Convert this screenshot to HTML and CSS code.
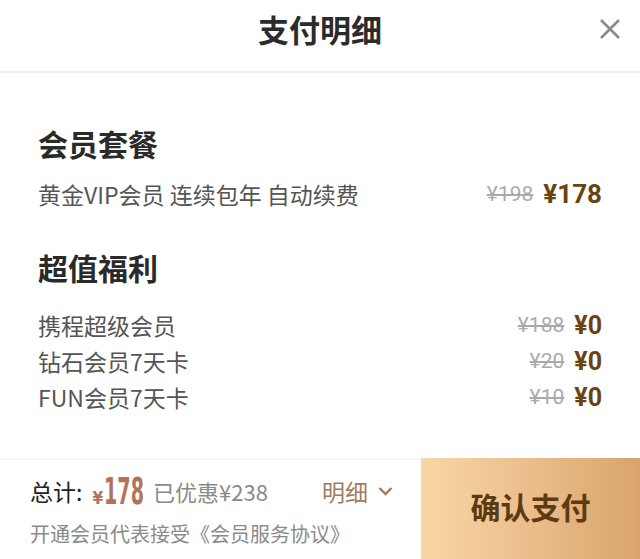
FILE: index.html
```html
<!DOCTYPE html>
<html lang="zh-CN">
<head>
<meta charset="utf-8">
<title>支付明细</title>
<link rel="stylesheet" href="styles.css">
</head>
<body>
<div class="sheet">
  <header class="header">
    <h1 class="title">支付明细</h1>
    <button class="close" aria-label="关闭">
      <svg width="22" height="22" viewBox="0 0 22 22"><path d="M2 2L20 20M20 2L2 20" stroke="#8a8a8a" stroke-width="2.6" stroke-linecap="butt"/></svg>
    </button>
  </header>
  <main class="content">
    <section class="section">
      <h2 class="section-title">会员套餐</h2>
      <div class="row">
        <span class="name">黄金VIP会员 连续包年 自动续费</span>
        <span class="prices"><s class="old">¥198</s><b class="now big">¥178</b></span>
      </div>
    </section>
    <section class="section second">
      <h2 class="section-title">超值福利</h2>
      <div class="row small">
        <span class="name">携程超级会员</span>
        <span class="prices"><s class="old">¥188</s><b class="now">¥0</b></span>
      </div>
      <div class="row small">
        <span class="name">钻石会员7天卡</span>
        <span class="prices"><s class="old">¥20</s><b class="now">¥0</b></span>
      </div>
      <div class="row small">
        <span class="name">FUN会员7天卡</span>
        <span class="prices"><s class="old">¥10</s><b class="now">¥0</b></span>
      </div>
    </section>
  </main>
  <footer class="footer">
    <div class="summary">
      <div class="total-line">
        <span class="total-label">总计:</span>
        <span class="total-price"><span class="yen">¥</span><span class="amount">178</span></span>
        <span class="saved">已优惠¥238</span>
        <span class="detail">明细
          <svg class="chev" width="15" height="10" viewBox="0 0 15 10"><path d="M1.5 2L7.5 8L13.5 2" fill="none" stroke="#a27a5e" stroke-width="2.4"/></svg>
        </span>
      </div>
      <div class="agreement">开通会员代表接受《会员服务协议》</div>
    </div>
    <button class="pay">确认支付</button>
  </footer>
</div>
</body>
</html>
```

FILE: styles.css
```css
* { box-sizing: border-box; }
html, body { margin: 0; padding: 0; background: #fff; }
body {
  font-family: "Noto Sans CJK SC", "Noto Sans", sans-serif;
  color: #333;
}
.sheet {
  width: 640px;
  height: 559px;
  display: flex;
  flex-direction: column;
  overflow: hidden;
}
.header {
  height: 73px;
  border-bottom: 2px solid #eeeeee;
  display: flex;
  align-items: center;
  justify-content: center;
  position: relative;
  flex: none;
}
.title {
  margin: 0 0 14px;
  font-size: 31px;
  font-weight: 700;
  color: #2b2b2b;
  line-height: 40px;
}
.close {
  position: absolute;
  right: 19px;
  top: 18px;
  border: 0;
  background: none;
  padding: 0;
  width: 22px;
  height: 22px;
  display: block;
}
.close svg { display: block; }
.content {
  flex: 1;
  padding: 0 38px;
}
.section { padding-top: 50px; }
.section.second { padding-top: 35px; }
.section-title {
  margin: 0 0 13px;
  font-size: 30px;
  font-weight: 700;
  line-height: 40px;
  color: #2a2a2a;
}
.section.second .section-title { margin-bottom: 20px; }
.row {
  display: flex;
  justify-content: space-between;
  align-items: center;
  height: 36px;
}
.name {
  font-size: 23px;
  color: #555;
}
.prices {
  display: flex;
  align-items: center;
  gap: 10px;
}
.old {
  font-family: "Roboto", "Noto Sans", sans-serif;
  font-size: 21px;
  color: #aaaaaa;
  text-decoration: line-through;
  text-decoration-thickness: 1.5px;
}
.now {
  font-family: "Roboto", "Noto Sans", sans-serif;
  font-weight: 700;
  font-size: 25px;
  color: #6a4312;
}
.now.big { font-size: 26px; }
.footer {
  height: 101px;
  flex: none;
  display: flex;
  border-top: 2px solid #f6f6f6;
}
.summary {
  flex: 1;
  padding: 11px 0 0 30px;
}
.total-line {
  display: flex;
  align-items: center;
  height: 40px;
}
.total-label {
  font-size: 23px;
  color: #222;
}
.total-price {
  display: inline-flex;
  align-items: baseline;
  margin-left: 10px;
  color: #b3735a;
}
.yen {
  font-family: "DejaVu Sans Condensed", "DejaVu Sans", sans-serif;
  font-weight: 700;
  font-size: 17px;
}
.amount {
  font-family: "DejaVu Sans Condensed", "DejaVu Sans", sans-serif;
  font-weight: 700;
  font-size: 38px;
  display: inline-block;
  transform: scaleX(0.56);
  transform-origin: left center;
  width: 41px;
  margin-left: 1px;
}
.saved {
  margin-left: 8px;
  font-size: 22px;
  color: #8a8a8a;
}
.detail {
  margin-left: 54px;
  font-size: 23px;
  color: #a17a5e;
  display: inline-flex;
  align-items: center;
  gap: 10px;
}
.chev { display: block; }
.agreement {
  margin-top: 8px;
  font-size: 20px;
  color: #8a8a8a;
}
.pay {
  width: 219px;
  flex: none;
  border: 0;
  margin: -2px 0 0;
  background: linear-gradient(90deg, #f8d7a4 0%, #ecc08e 45%, #d9a46c 100%);
  font-family: "Noto Sans CJK SC", sans-serif;
  font-size: 30px;
  font-weight: 700;
  color: #5c3a12;
  padding: 0 0 6px;
}
```
